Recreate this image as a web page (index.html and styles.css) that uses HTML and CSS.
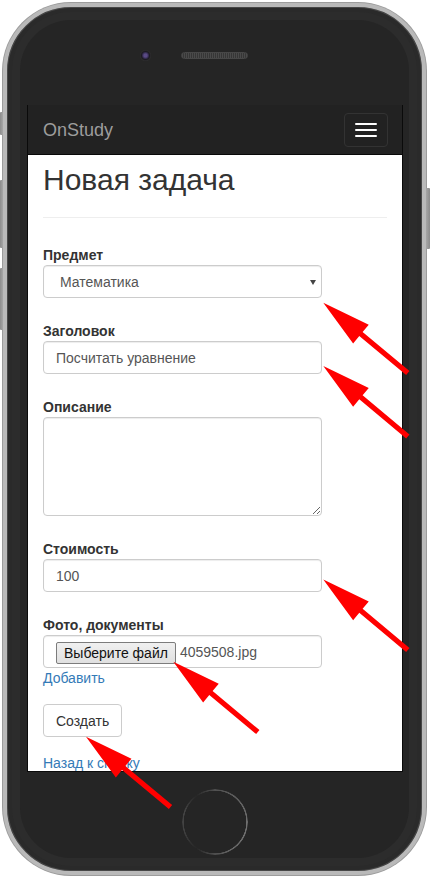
FILE: index.html
```html
<!DOCTYPE html>
<html lang="ru">
<head>
<meta charset="utf-8">
<title>OnStudy — Новая задача</title>
<link rel="stylesheet" href="styles.css">
</head>
<body>
<div class="phone">
  <span class="side side-mute"></span>
  <span class="side side-vol-up"></span>
  <span class="side side-vol-down"></span>
  <span class="side side-power"></span>

  <div class="top">
    <span class="camera"></span>
    <span class="speaker"></span>
  </div>

  <div class="screen">
    <nav class="navbar">
      <span class="brand">OnStudy</span>
      <button class="toggle" type="button" aria-label="menu">
        <span class="bar"></span><span class="bar"></span><span class="bar"></span>
      </button>
    </nav>
    <main class="content">
      <h1 class="page-title">Новая задача</h1>
      <form class="form">
        <div class="group">
          <label class="label">Предмет</label>
          <div class="select-wrap">
            <select class="control select"><option>Математика</option></select>
          </div>
        </div>
        <div class="group">
          <label class="label">Заголовок</label>
          <input class="control" type="text" value="Посчитать уравнение">
        </div>
        <div class="group">
          <label class="label">Описание</label>
          <textarea class="control textarea"></textarea>
        </div>
        <div class="group">
          <label class="label">Стоимость</label>
          <input class="control" type="text" value="100">
        </div>
        <div class="group group-last">
          <label class="label">Фото, документы</label>
          <div class="control file">
            <span class="file-btn">Выберите файл</span>
            <span class="file-name">4059508.jpg</span>
          </div>
          <a class="link" href="#">Добавить</a>
        </div>
        <button class="btn" type="button">Создать</button>
        <a class="link back" href="#">Назад к списку</a>
      </form>
    </main>
  </div>

  <div class="bottom">
    <span class="home"></span>
  </div>
</div>

<svg class="arrows" width="431" height="877" viewBox="0 0 431 877">
  <defs>
    <polygon id="arrow" points="0,0 49,-12.2 49,-2.6 110,-2.6 110,2.6 49,2.6 49,12.2" fill="#ff0000"/>
  </defs>
  <use href="#arrow" transform="translate(323.3 302.7) rotate(39.8)"/>
  <use href="#arrow" transform="translate(323.3 366) rotate(39.8)"/>
  <use href="#arrow" transform="translate(323.3 579.5) rotate(39.8)"/>
  <use href="#arrow" transform="translate(173.3 661.7) rotate(39.8)"/>
  <use href="#arrow" transform="translate(86 736.7) rotate(39.8)"/>
</svg>
</body>
</html>
```

FILE: styles.css
```css
* { box-sizing: border-box; }

html, body {
  margin: 0;
  padding: 0;
  background: #ffffff;
  width: 431px;
  height: 877px;
  overflow: hidden;
}

body {
  position: relative;
  padding: 3px 0 0 3px;
  font-family: "Liberation Sans", Arial, sans-serif;
  font-size: 14px;
  color: #333;
}

/* ---------- phone body ---------- */
.phone {
  position: relative;
  width: 423px;
  height: 872px;
  border: 4px solid #b9b9b9;
  border-radius: 68px;
  background: #252525;
  box-shadow:
    0 0 0 1px #9c9c9c,
    inset 0 0 0 1px #474747,
    inset 0 0 0 5px #2a2a2a,
    inset 0 0 0 13px #2c2c2c;
  display: flex;
  flex-direction: column;
}

.side {
  position: absolute;
  background: linear-gradient(90deg, #8c8c8c, #a6a6a6);
  border-radius: 1px;
}
.side-mute     { left: -7px; top: 105px; width: 3px; height: 23px; }
.side-vol-up   { left: -7px; top: 173px; width: 3px; height: 68px; }
.side-vol-down { left: -7px; top: 261px; width: 3px; height: 62px; }
.side-power    { right: -8px; top: 181px; width: 4px; height: 61px; background: linear-gradient(90deg, #a6a6a6, #8c8c8c); }

.top {
  flex: none;
  height: 98px;
  padding-top: 43px;
  display: grid;
  grid-template-columns: 1fr 67px 1fr;
  align-items: center;
  align-content: start;
}

.camera {
  justify-self: end;
  margin-right: 30px;
  width: 11px;
  height: 11px;
  border-radius: 50%;
  background: radial-gradient(circle at 50% 50%, #5a4a85 0 1.5px, #3a3058 2.8px, #1c1a22 4px, #2f2f2f 5.5px);
}

.speaker {
  width: 67px;
  height: 7px;
  border-radius: 4px;
  border: 1px solid #474747;
  background: repeating-linear-gradient(90deg, #4a4a4a 0 1px, #363636 1px 2px);
}

/* ---------- screen ---------- */
.screen {
  flex: none;
  margin-left: 20px;
  width: 376px;
  height: 667px;
  background: #fff;
  border: 1px solid #0a0a0a;
  border-top: 0;
  overflow: hidden;
}

.navbar {
  height: 50px;
  background: #222;
  border-bottom: 1px solid #080808;
  display: flex;
  align-items: center;
  justify-content: space-between;
  padding: 0 14px 0 15px;
}

.brand {
  font-size: 18px;
  line-height: 20px;
  color: #9d9d9d;
}

.toggle {
  width: 44px;
  height: 34px;
  padding: 0;
  border: 1px solid #333;
  border-radius: 4px;
  background: transparent;
  display: flex;
  flex-direction: column;
  align-items: center;
  justify-content: center;
  gap: 4px;
}

.bar {
  display: block;
  width: 22px;
  height: 2px;
  border-radius: 1px;
  background: #fff;
}

.content {
  padding: 0 15px;
}

.page-title {
  margin: 8px 0 0;
  padding-bottom: 21px;
  border-bottom: 1px solid #eee;
  font-size: 30px;
  line-height: 33px;
  font-weight: 400;
  color: #333;
}

.form {
  margin-top: 27px;
}

.group {
  margin-bottom: 23px;
}

.group-last {
  margin-bottom: 16px;
}

.label {
  display: block;
  font-weight: 700;
  font-size: 14px;
  line-height: 20px;
  color: #333;
}

.control {
  display: block;
  width: 279px;
  height: 33px;
  margin: 0;
  padding: 6px 12px;
  font-family: "Liberation Sans", Arial, sans-serif;
  font-size: 14px;
  line-height: 20px;
  color: #555;
  background: #fff;
  border: 1px solid #ccc;
  border-radius: 4px;
  box-shadow: inset 0 1px 1px rgba(0, 0, 0, .075);
  outline: none;
}

.select-wrap {
  position: relative;
  width: 279px;
}

.select {
  appearance: none;
  -webkit-appearance: none;
  padding-left: 16px;
}

.select-wrap::after {
  content: "";
  position: absolute;
  right: 6px;
  top: 15px;
  border-left: 3px solid transparent;
  border-right: 3px solid transparent;
  border-top: 5px solid #444;
}

.textarea {
  height: 99px;
  resize: vertical;
}

.file {
  display: flex;
  align-items: center;
  padding: 0 12px;
}

.file-btn {
  margin-top: 2px;
  height: 22px;
  padding: 0 7px;
  line-height: 20px;
  color: #111;
  background: linear-gradient(#f0f0f0, #e0e0e0);
  border: 1px solid #7c7c7c;
  border-radius: 2px;
  white-space: nowrap;
}

.file-name {
  margin-left: 4px;
  color: #555;
}

.link {
  display: inline-block;
  font-size: 14px;
  line-height: 20px;
  color: #337ab7;
  text-decoration: none;
}

.btn {
  display: block;
  height: 33px;
  padding: 0 12px;
  margin-bottom: 16px;
  font-family: "Liberation Sans", Arial, sans-serif;
  font-size: 14px;
  line-height: 20px;
  color: #333;
  background: #fff;
  border: 1px solid #ccc;
  border-radius: 4px;
}

.back {
  display: block;
}

/* ---------- bottom / home ---------- */
.bottom {
  flex: 1;
  display: flex;
  align-items: center;
  justify-content: center;
}

.home {
  width: 66px;
  height: 66px;
  margin-left: 1px;
  border-radius: 50%;
  background: conic-gradient(#505050 0deg, #5e5e5e 40deg, #727272 100deg, #666 150deg, #4a4a4a 185deg, #262626 215deg, #424242 255deg, #444 290deg, #262626 325deg, #505050 360deg);
  -webkit-mask: radial-gradient(circle, transparent 31px, #000 31.5px, #000 32.8px, transparent 33.3px);
  mask: radial-gradient(circle, transparent 31px, #000 31.5px, #000 32.8px, transparent 33.3px);
}

/* ---------- annotation arrows ---------- */
.arrows {
  position: absolute;
  left: 0;
  top: 0;
  pointer-events: none;
}
```
